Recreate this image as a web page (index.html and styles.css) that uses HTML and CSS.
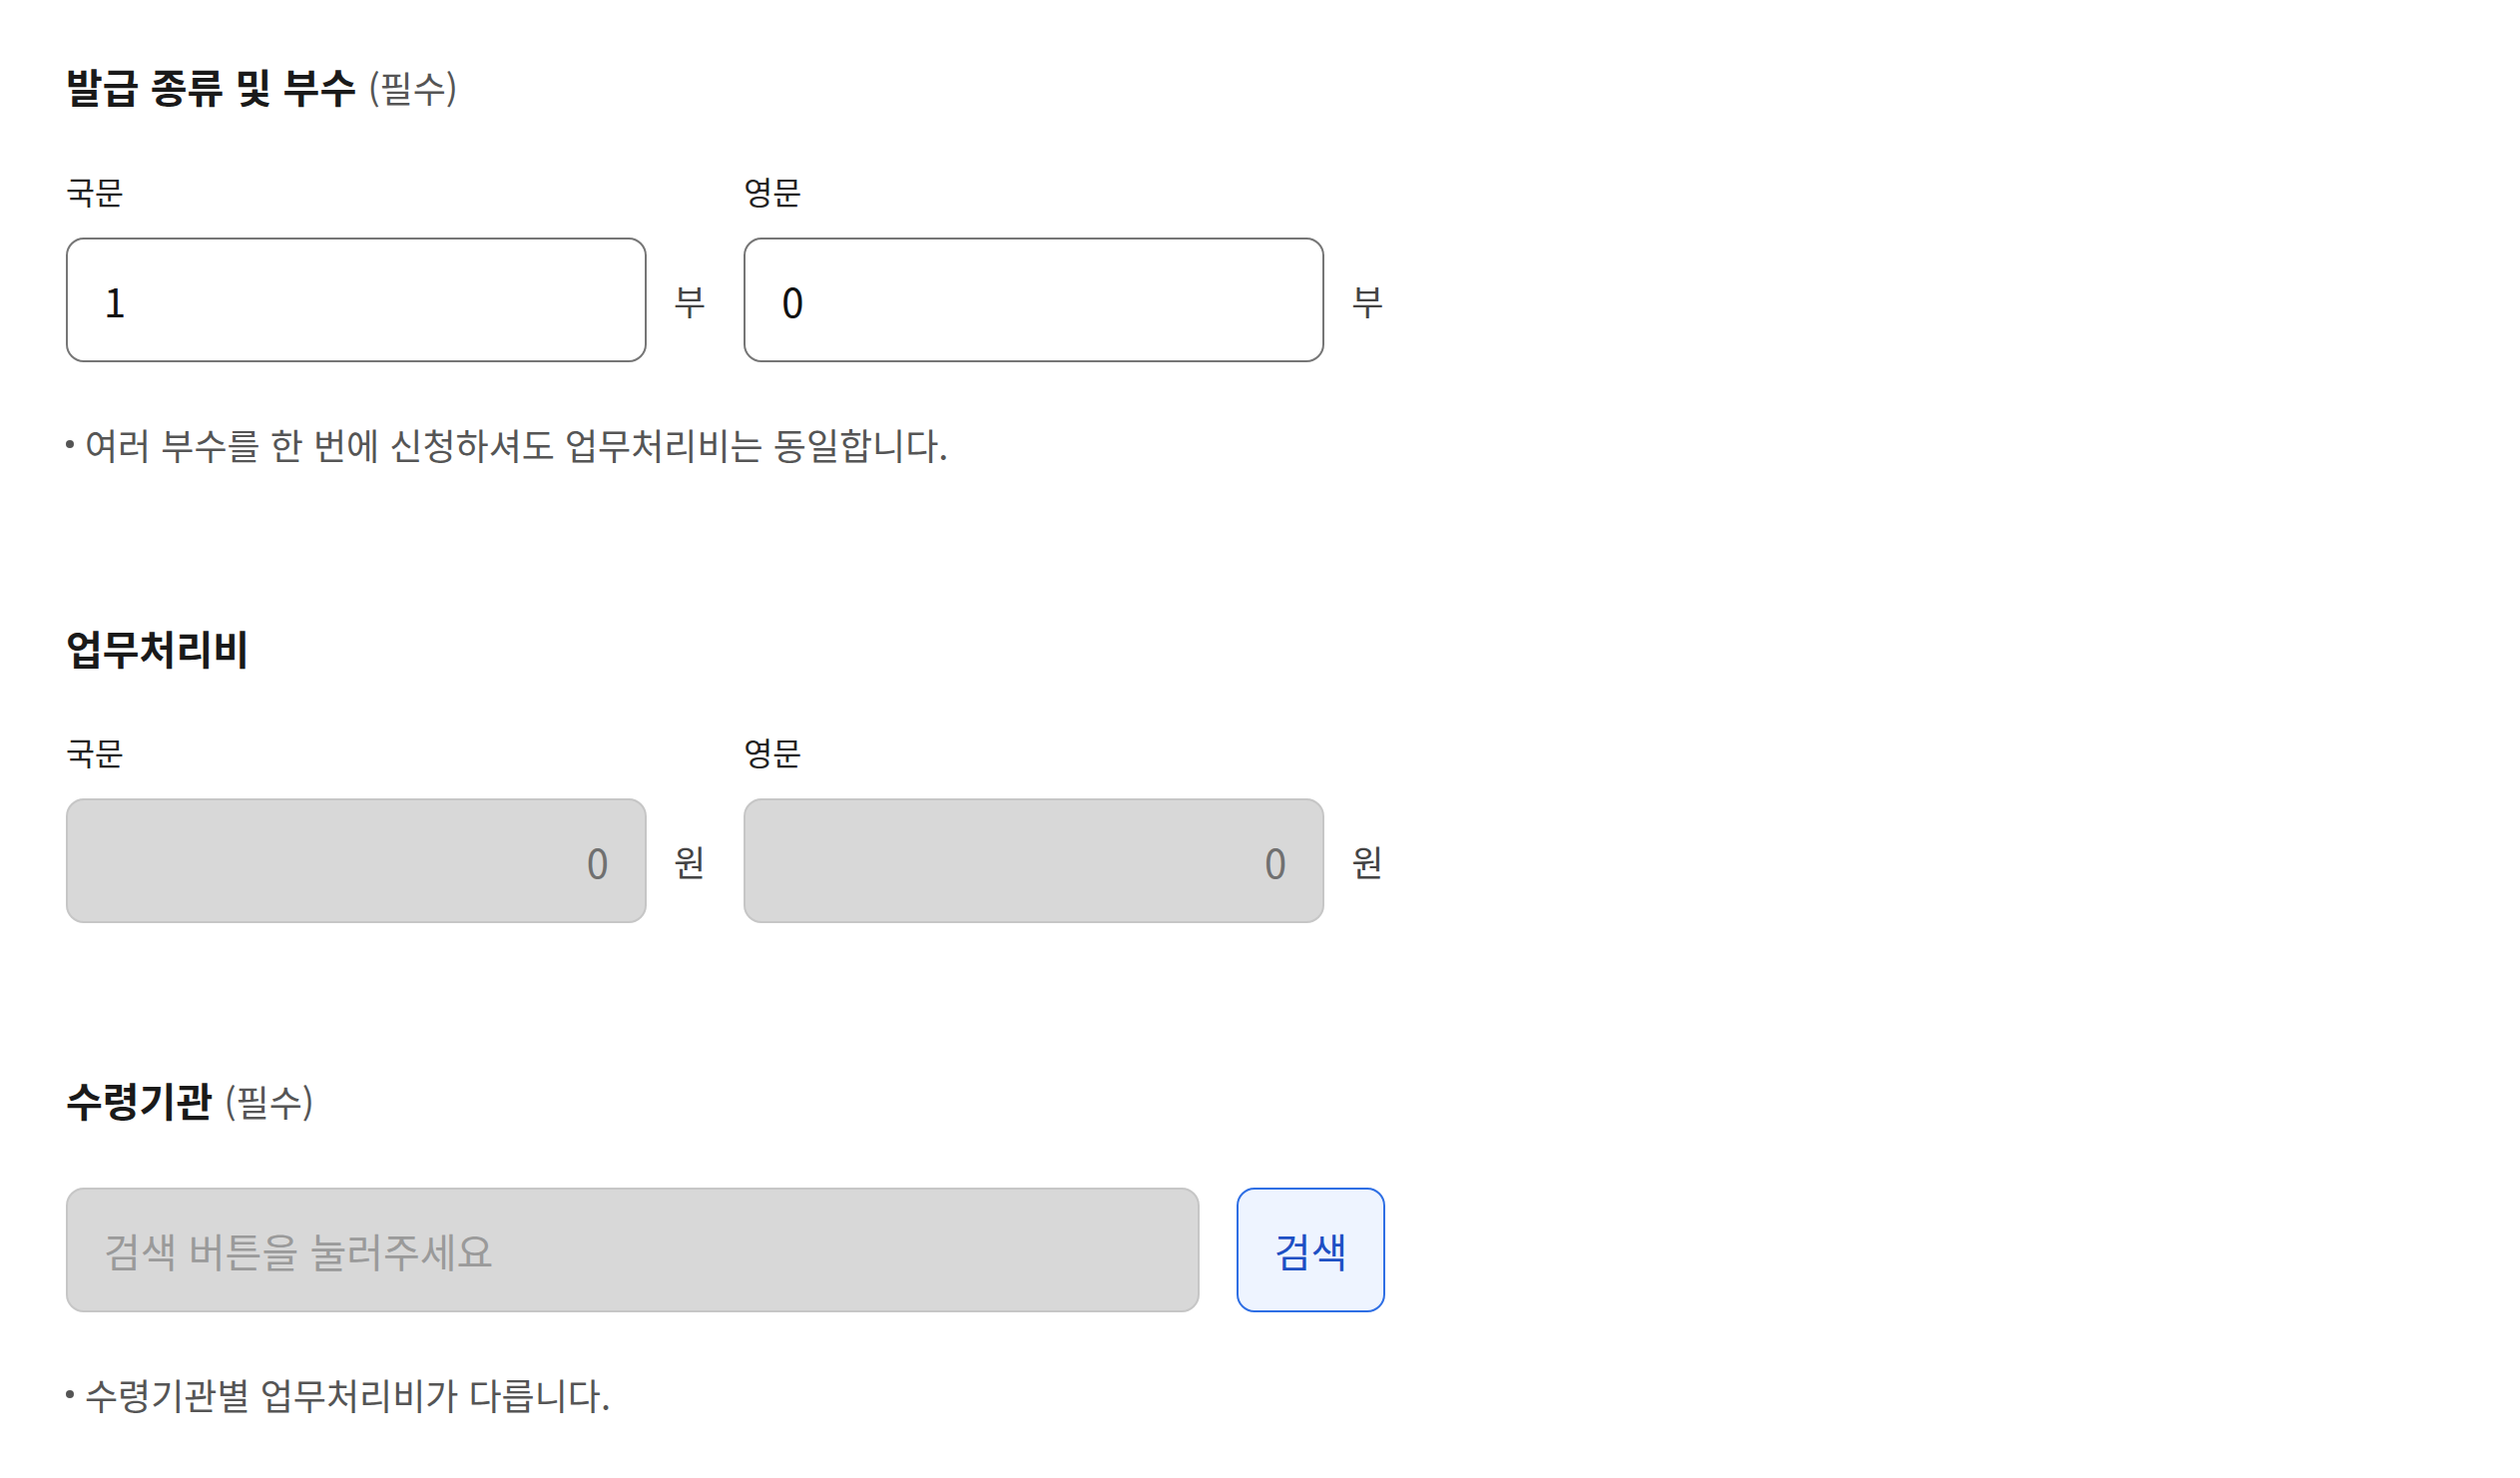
FILE: index.html
```html
<!DOCTYPE html>
<html lang="ko">
<head>
<meta charset="utf-8">
<title>발급 신청</title>
<link rel="stylesheet" href="styles.css">
</head>
<body>
<main class="form">
  <section class="sec sec-count">
    <h2 class="sec-title">발급 종류 및 부수 <span class="req">(필수)</span></h2>
    <div class="pair-row">
      <div class="field">
        <label class="field-label">국문</label>
        <div class="field-control">
          <input class="box" type="text" value="1">
          <span class="unit">부</span>
        </div>
      </div>
      <div class="field">
        <label class="field-label">영문</label>
        <div class="field-control">
          <input class="box" type="text" value="0">
          <span class="unit">부</span>
        </div>
      </div>
    </div>
    <p class="note">여러 부수를 한 번에 신청하셔도 업무처리비는 동일합니다.</p>
  </section>

  <section class="sec sec-fee">
    <h2 class="sec-title">업무처리비</h2>
    <div class="pair-row">
      <div class="field">
        <label class="field-label">국문</label>
        <div class="field-control">
          <input class="box box-readonly" type="text" value="0" readonly>
          <span class="unit">원</span>
        </div>
      </div>
      <div class="field">
        <label class="field-label">영문</label>
        <div class="field-control">
          <input class="box box-readonly" type="text" value="0" readonly>
          <span class="unit">원</span>
        </div>
      </div>
    </div>
  </section>

  <section class="sec sec-org">
    <h2 class="sec-title">수령기관 <span class="req">(필수)</span></h2>
    <div class="search-row">
      <input class="box box-search" type="text" placeholder="검색 버튼을 눌러주세요" readonly>
      <button class="btn-search" type="button">검색</button>
    </div>
    <p class="note">수령기관별 업무처리비가 다릅니다.</p>
  </section>
</main>
</body>
</html>
```

FILE: styles.css
```css
* {
  box-sizing: border-box;
}

html, body {
  margin: 0;
  padding: 0;
  background: #ffffff;
}

body {
  font-family: "Noto Sans CJK KR", "Noto Sans", sans-serif;
  color: #222222;
}

.form {
  padding: 0 0 0 66px;
}

.sec-title {
  margin: 0;
  font-size: 40px;
  line-height: 50px;
  font-weight: 700;
  color: #1a1a1a;
}

.req {
  font-size: 36px;
  font-weight: 400;
  color: #555555;
}

.sec-count {
  padding-top: 61px;
}

.sec-fee {
  margin-top: 155px;
}

.sec-org {
  margin-top: 152px;
}

.pair-row {
  display: flex;
  gap: 38px;
  margin-top: 59px;
}

.field {
  display: flex;
  flex-direction: column;
}

.field-label {
  display: block;
  font-size: 31.5px;
  line-height: 40px;
  color: #222222;
}

.field-control {
  display: flex;
  align-items: center;
  gap: 27px;
  margin-top: 27px;
}

.box {
  width: 582px;
  height: 125px;
  margin: 0;
  padding: 0 36px;
  border: 2px solid #767676;
  border-radius: 18px;
  background: #ffffff;
  font-family: "Noto Sans CJK KR", "Noto Sans", sans-serif;
  font-size: 40px;
  color: #111111;
  outline: none;
}

.box-readonly {
  background: #d8d8d8;
  border-color: #c6c6c6;
  color: #707070;
  text-align: right;
}

.unit {
  font-size: 35px;
  line-height: 40px;
  color: #444444;
}

.note {
  margin: 58px 0 0;
  font-size: 36px;
  line-height: 48px;
  color: #555555;
  display: flex;
  align-items: center;
}

.note::before {
  content: "";
  width: 8px;
  height: 8px;
  border-radius: 50%;
  background: #555555;
  margin-right: 11px;
  flex: none;
}

.search-row {
  display: flex;
  align-items: center;
  gap: 37px;
  margin-top: 62px;
}

.box-search {
  width: 1136px;
  background: #d8d8d8;
  border-color: #c6c6c6;
  color: #9a9a9a;
  font-size: 40px;
}

.box-search::placeholder {
  color: #9a9a9a;
  opacity: 1;
}

.btn-search {
  width: 149px;
  height: 125px;
  margin: 0;
  padding: 0;
  border: 2px solid #2f6fe4;
  border-radius: 18px;
  background: #eef4ff;
  font-family: "Noto Sans CJK KR", "Noto Sans", sans-serif;
  font-size: 40px;
  color: #1d4fc4;
  cursor: pointer;
}
```
